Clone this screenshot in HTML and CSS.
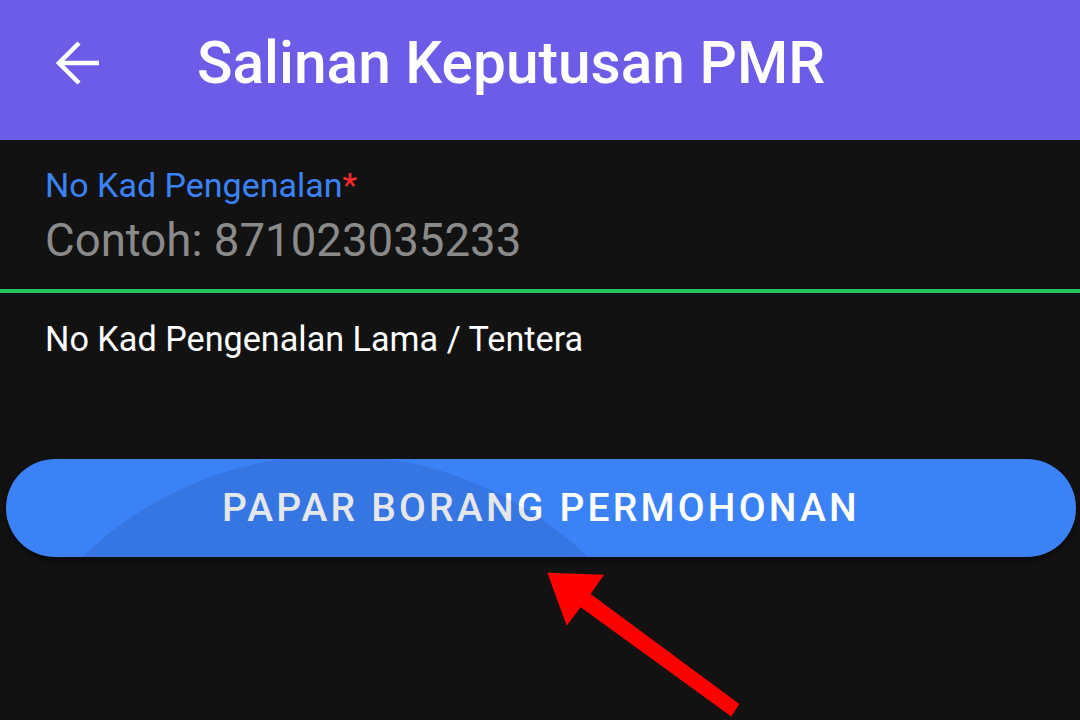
FILE: index.html
```html
<!DOCTYPE html>
<html lang="ms">
<head>
<meta charset="utf-8">
<title>Salinan Keputusan PMR</title>
<link rel="stylesheet" href="styles.css">
</head>
<body>
<div class="screen">
  <header class="appbar">
    <svg class="back" width="48" height="48" viewBox="0 0 48 48" aria-hidden="true">
      <path d="M45 24H4" fill="none" stroke="#fff" stroke-width="4.5"/>
      <path d="M25 4L5 24L25 44" fill="none" stroke="#fff" stroke-width="4.5" stroke-linejoin="miter"/>
    </svg>
    <h1 class="title">Salinan Keputusan PMR</h1>
  </header>

  <section class="field">
    <div class="label">No Kad Pengenalan<span class="req">*</span></div>
    <div class="placeholder">Contoh: 871023035233</div>
  </section>
  <div class="underline"></div>

  <div class="alt-link">No Kad Pengenalan Lama / Tentera</div>

  <div class="btn-wrap">
    <button class="btn">
      <span class="btn-text">PAPAR BORANG PERMOHONAN</span>
      <span class="ripple"></span>
    </button>
  </div>

  <svg class="annot" width="1080" height="720" viewBox="0 0 1080 720" aria-hidden="true">
    <polygon points="547.3,572.7 604,574.7 590.7,594 739.3,704 731.3,716.5 580.7,607.3 566.7,625.7" fill="#ff0000"/>
  </svg>
</div>
</body>
</html>
```

FILE: styles.css
```css
html, body {
  margin: 0;
  padding: 0;
  background: #121212;
}

.screen {
  position: relative;
  width: 1080px;
  height: 720px;
  overflow: hidden;
  background: #121212;
  font-family: Roboto, "Noto Sans", sans-serif;
}

.appbar {
  height: 140px;
  box-sizing: border-box;
  padding: 0 0 14px 54px;
  background: #6c5ce7;
  display: flex;
  align-items: center;
  gap: 95px;
}

.back {
  flex: none;
  display: block;
}

.title {
  margin: 0;
  font-size: 58.6px;
  line-height: 68px;
  font-weight: 500;
  color: #ffffff;
}

.field {
  padding: 25px 0 21px 45px;
  display: flex;
  flex-direction: column;
  gap: 9px;
}

.label {
  font-size: 34px;
  line-height: 40px;
  color: #3b82f6;
}

.req {
  color: #ff2a2a;
}

.placeholder {
  font-size: 45.6px;
  line-height: 54px;
  color: #8a8a8a;
}

.underline {
  height: 4px;
  background: #22c55e;
}

.alt-link {
  margin-top: 26px;
  padding-left: 45px;
  font-size: 34.2px;
  line-height: 40px;
  color: #ffffff;
}

.btn-wrap {
  margin-top: 100px;
  padding: 0 4px 0 6px;
}

.btn {
  position: relative;
  overflow: hidden;
  width: 100%;
  height: 98px;
  border: none;
  border-radius: 49px;
  background: #3b82f6;
  box-shadow: 0 3px 6px rgba(0, 0, 0, 0.55);
  padding: 0;
  display: flex;
  align-items: center;
  justify-content: center;
  font-family: Roboto, "Noto Sans", sans-serif;
}

.btn-text {
  font-size: 39px;
  line-height: 98px;
  font-weight: 500;
  letter-spacing: 3.2px;
  color: #ffffff;
}

.ripple {
  position: absolute;
  left: -35px;
  top: -4px;
  width: 728px;
  height: 728px;
  border-radius: 50%;
  background: rgba(10, 20, 50, 0.1);
  pointer-events: none;
}

.annot {
  position: absolute;
  left: 0;
  top: 0;
  pointer-events: none;
}
```
